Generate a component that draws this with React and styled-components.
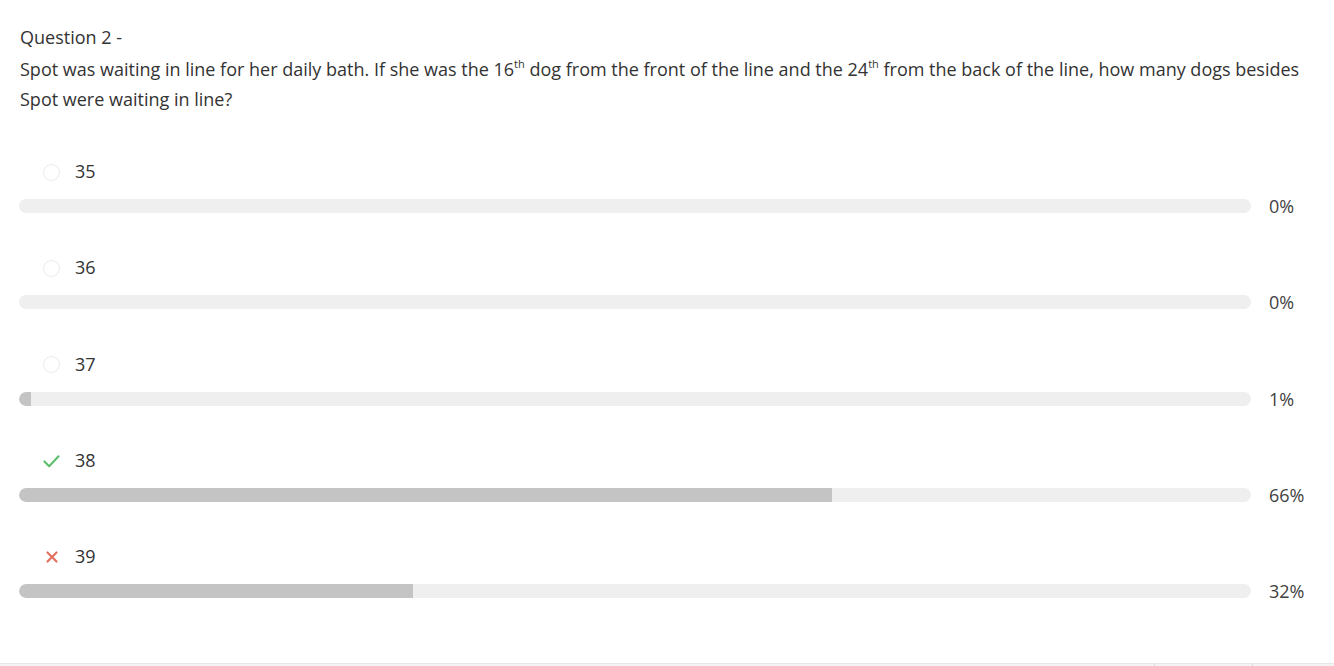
import React from "react";
import styled, { createGlobalStyle } from "styled-components";

const Global = createGlobalStyle`
  html, body { margin: 0; padding: 0; background: #fff; }
  body { font-family: "Open Sans", "Lato", sans-serif; color: #333; overflow: hidden; }
`;

const Screen = styled.div`
  width: 1334px;
  height: 666px;
  display: flex;
  flex-direction: column;
`;

const Page = styled.main`
  flex: 1;
  padding: 22px 0 0 19px;
  box-sizing: border-box;
`;

const Title = styled.div`
  font-size: 18px;
  line-height: 30px;
  padding-left: 1px;
`;

const Question = styled.p`
  margin: 2px 0 0;
  font-size: 18px;
  line-height: 30px;
  padding-left: 1px;
  padding-right: 20px;
  sup { font-size: 11px; line-height: 0; vertical-align: 8px; }
`;

const Options = styled.div`
  margin-top: 45px;
  display: flex;
  flex-direction: column;
  gap: 42.25px;
`;

const Option = styled.div`
  display: flex;
  flex-direction: column;
  gap: 16px;
`;

const LabelRow = styled.div`
  display: flex;
  align-items: center;
  gap: 15px;
  padding-left: 24px;
  height: 24px;
  font-size: 18px;
`;

const Marker = styled.span`
  width: 17px;
  height: 17px;
  display: flex;
  align-items: center;
  justify-content: center;
  margin-top: 2px;
`;

const Radio = styled.span`
  width: 15px;
  height: 15px;
  border-radius: 50%;
  border: 1.5px solid #ebebeb;
`;

const BarRow = styled.div`
  display: grid;
  grid-template-columns: 1fr 65px;
  column-gap: 18px;
  align-items: center;
  height: 14px;
`;

const Track = styled.div`
  height: 14px;
  border-radius: 7px;
  background: #efefef;
  overflow: hidden;
`;

const Fill = styled.div`
  height: 100%;
  background: #c4c4c4;
  border-radius: 7px 0 0 7px;
`;

const Pct = styled.span`
  font-size: 18px;
  color: #3f3f3f;
  line-height: 14px;
`;

const Footer = styled.footer`
  height: 3px;
  display: grid;
  grid-template-columns: 1154px 98px 1fr;
  background: #f3f3f3;
  border-top: 1px solid #e6e6e6;
  box-sizing: border-box;
`;

const FooterCell = styled.div`
  border-left: ${(p) => (p.$first ? "none" : "1px solid #dcdcdc")};
`;

const Check = () => (
  <svg width="18" height="16" viewBox="0 0 18 16">
    <path d="M1.5 8.5 L6.5 13.5 L16.5 3" fill="none" stroke="#5dbe6c" strokeWidth="2.2" strokeLinecap="round" strokeLinejoin="round" />
  </svg>
);

const Cross = () => (
  <svg width="14" height="14" viewBox="0 0 14 14">
    <path d="M2.5 2.5 L11.5 11.5 M11.5 2.5 L2.5 11.5" stroke="#e2705f" strokeWidth="2.2" strokeLinecap="round" />
  </svg>
);

const options = [
  { label: "35", pct: 0, mark: "radio" },
  { label: "36", pct: 0, mark: "radio" },
  { label: "37", pct: 1, mark: "radio" },
  { label: "38", pct: 66, mark: "check" },
  { label: "39", pct: 32, mark: "cross" },
];

export default function App() {
  return (
    <Screen>
      <Global />
      <Page>
        <Title>Question 2 -</Title>
        <Question>
          Spot was waiting in line for her daily bath. If she was the 16<sup>th</sup> dog from the front of the line and the 24<sup>th</sup> from the back of the line, how many dogs besides Spot were waiting in line?
        </Question>
        <Options>
          {options.map((o) => (
            <Option key={o.label}>
              <LabelRow>
                <Marker>
                  {o.mark === "radio" && <Radio />}
                  {o.mark === "check" && <Check />}
                  {o.mark === "cross" && <Cross />}
                </Marker>
                <span>{o.label}</span>
              </LabelRow>
              <BarRow>
                <Track>
                  <Fill style={{ width: `${o.pct}%` }} />
                </Track>
                <Pct>{o.pct}%</Pct>
              </BarRow>
            </Option>
          ))}
        </Options>
      </Page>
      <Footer>
        <FooterCell $first />
        <FooterCell />
        <FooterCell />
      </Footer>
    </Screen>
  );
}
